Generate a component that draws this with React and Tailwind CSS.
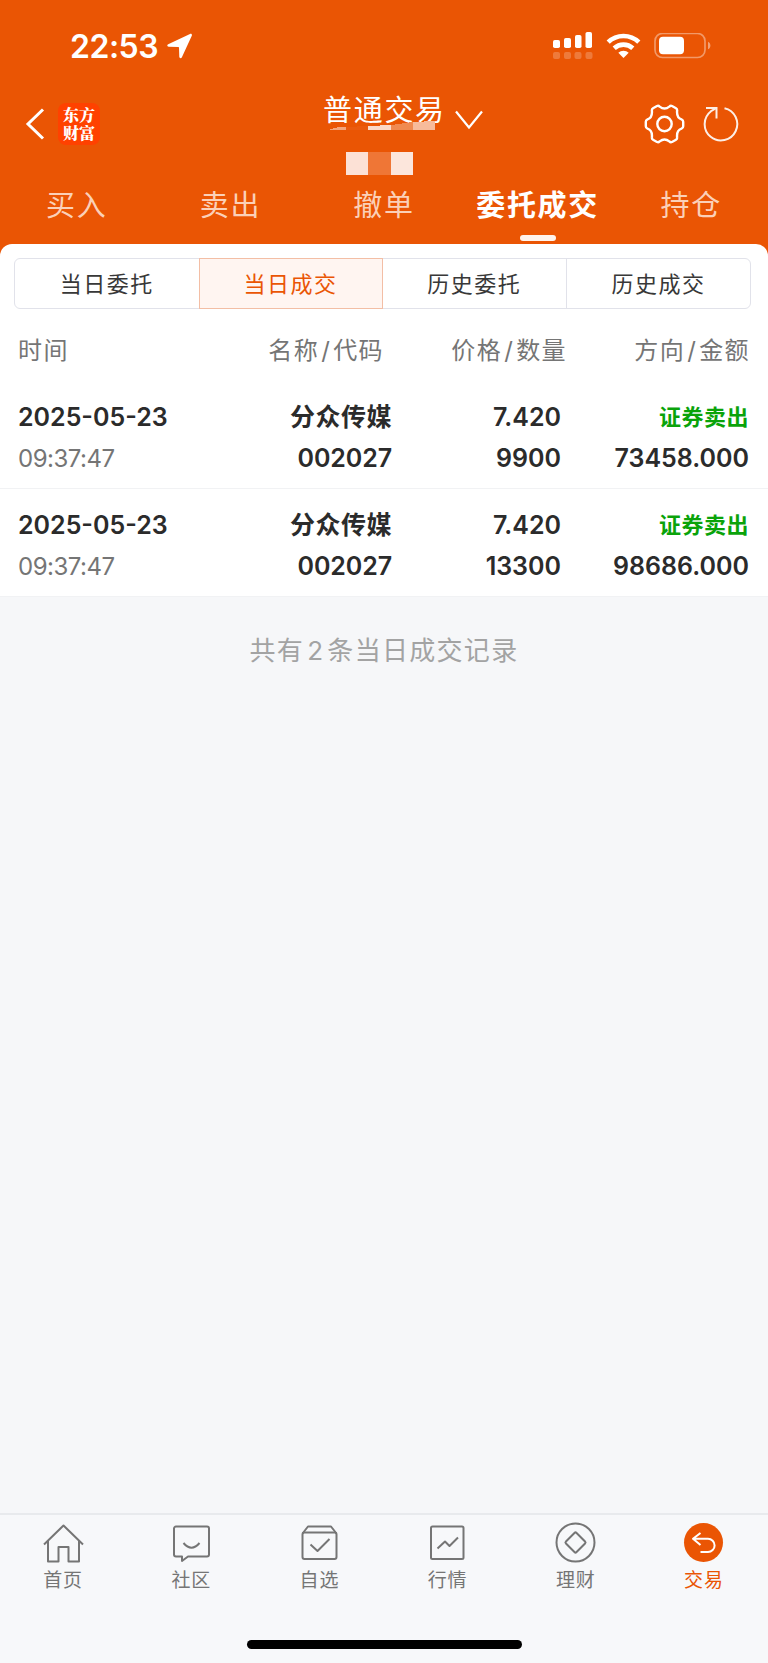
import React from "react";

const tabs = ["买入", "卖出", "撤单", "委托成交", "持仓"];
const segments = ["当日委托", "当日成交", "历史委托", "历史成交"];

const trades = [
  { id: 1, date: "2025-05-23", time: "09:37:47", name: "分众传媒", code: "002027", price: "7.420", qty: "9900", side: "证券卖出", amount: "73458.000" },
  { id: 2, date: "2025-05-23", time: "09:37:47", name: "分众传媒", code: "002027", price: "7.420", qty: "13300", side: "证券卖出", amount: "98686.000" },
];

const StatusBar = () => (
  <div className="flex h-[92px] items-center justify-between pl-[70px] pr-[57px]">
    <div className="flex items-center gap-[9px]">
      <span className="w-[88px] pt-[2px] whitespace-nowrap text-[32px] leading-none font-semibold tracking-[-0.500px]">22:53</span>
      <svg className="h-[26px] w-[26px]" viewBox="0 0 26 26" fill="currentColor">
        <path d="M1.2 11.2 23 1c1.300-.5 2.300.5 1.800 1.800L14.900 24.300c-.700 1.300-2.500 1.100-2.600-.500l-.3-9.200c0-.4-.3-.7-.7-.7l-9.600-.2C.1 13.600-.200 11.900 1.200 11.200z" />
      </svg>
    </div>
    <div className="flex items-center">
      <svg className="h-[28px] w-[40px]" viewBox="0 0 40 28" fill="currentColor">
        <rect x="0" y="8" width="7" height="8" rx="1.800" />
        <rect x="11" y="6" width="7" height="10" rx="1.800" />
        <rect x="22" y="3" width="6.500" height="13" rx="1.800" />
        <rect x="32.500" y="0" width="6.500" height="16" rx="1.800" />
        <g opacity="0.22">
          <rect x="0" y="20" width="7" height="7" rx="2" />
          <rect x="11" y="20" width="7" height="7" rx="2" />
          <rect x="21.500" y="20" width="7" height="7" rx="2" />
          <rect x="32.500" y="20" width="7" height="7" rx="2" />
        </g>
      </svg>
      <svg className="ml-[13px] h-[26px] w-[35px]" viewBox="0 0 35 26" fill="none" stroke="currentColor" strokeWidth="4.600">
        <path d="M2.200 9.200a22 22 0 0 1 30.600 0" />
        <path d="M8.200 15.300a13.600 13.600 0 0 1 18.600 0" />
        <path d="M17.500 25l-5.200-5.200a7.500 7.500 0 0 1 10.400 0z" fill="currentColor" stroke="none" />
      </svg>
      <svg className="ml-[13px] h-[26px] w-[57px]" viewBox="0 0 57 26" fill="currentColor">
        <rect x="1" y="0.500" width="50" height="24" rx="7.500" fill="none" stroke="currentColor" strokeWidth="1.700" opacity="0.4" />
        <rect x="5" y="3.800" width="25" height="17.500" rx="4" />
        <path d="M54 8.700c3.200 1.300 3.200 6.300 0 7.600z" opacity="0.45" />
      </svg>
    </div>
  </div>
);

const Header = () => (
  <header className="h-[256px] bg-[#ea5504] text-white">
    <StatusBar />
    <div className="flex h-[88px] items-start justify-between pl-[25px] pr-[29px]">
      <div className="flex w-[280px] items-center gap-[13px] pt-[11px]">
        <svg className="h-[34px] w-[20px]" viewBox="0 0 20 34" fill="none" stroke="currentColor" strokeWidth="3">
          <path d="M18 2.500 3 17l15 14.500" />
        </svg>
        <div className="flex h-[42px] w-[42px] items-center justify-center rounded-[8px] bg-[#ff4100]">
          <span className="w-[33px] text-center font-['Noto_Serif_CJK_SC','Noto_Sans_CJK_SC',serif] text-[16px] leading-[18px] font-black break-all">东方财富</span>
        </div>
      </div>
      <div className="relative flex w-[176px] items-start pt-[1px]">
        <span className="w-[132px] pt-[2px] pl-[18px] whitespace-nowrap text-[29px] leading-[32px] tracking-[1.700px]">普通交易</span>
        <svg className="mt-[17px] ml-[18px] h-[20px] w-[28px] shrink-0" viewBox="0 0 28 20" fill="none" stroke="currentColor" strokeWidth="2.200">
          <path d="M1 1.500 14 17.500 27 1.500" />
        </svg>
        {/* masked account name */}
        <svg className="absolute top-[28px] left-[25px] h-[56px] w-[106px]" viewBox="0 0 106 56" shapeRendering="crispEdges">
          <path d="M0 9.500c5-2.500 10-2.800 16-2v2z" fill="#f4a57c" />
          <path d="M16 7l22-1v3.500H16z" fill="#ea5a0f" />
          <path d="M38 6l23-1v4.500H38z" fill="#fbd9c8" />
          <path d="M61 5l22-3v7.500H61z" fill="#f08a50" />
          <path d="M83 2l22-1v8.500H83z" fill="#f7bb9b" />
          <rect x="16" y="32" width="22.500" height="23" fill="#fce1d6" />
          <rect x="38" y="32" width="23" height="23" fill="#ef7636" />
          <rect x="61" y="32" width="22" height="23" fill="#fce6dc" />
        </svg>
      </div>
      <div className="flex w-[258px] items-center justify-end gap-[18px] pt-[12px]">
        <svg className="h-[40px] w-[41px]" viewBox="-20.500 -20 41 40" fill="none" stroke="currentColor" strokeWidth="2.400" strokeLinejoin="round">
          <path d="M-11.500-15.800L-7.500-18Q-6-18.600-4.800-17.400Q0-13.600 4.800-17.400Q6-18.600 7.500-18L11.500-15.800Q12.900-15 12.600-13.200Q12-6.300 17-4.700Q18.700-4 18.700-2.200V2.200Q18.700 4 17 4.700Q12 6.300 12.600 13.200Q12.900 15 11.500 15.800L7.500 18Q6 18.600 4.800 17.400Q0 13.600-4.800 17.400Q-6 18.600-7.500 18L-11.500 15.800Q-12.900 15-12.600 13.200Q-12 6.300-17 4.700Q-18.700 4-18.700 2.200V-2.200Q-18.700-4-17-4.700Q-12-6.300-12.600-13.200Q-12.900-15-11.500-15.800Z" />
          <circle r="7.200" />
        </svg>
        <svg className="h-[36px] w-[36px]" viewBox="0 0 36 36" fill="none" stroke="currentColor" strokeWidth="2" opacity="0.9">
          <path d="M21.500 2.200A16.300 16.300 0 1 1 8 5.200L13.500 2" />
          <path d="M3 2h10.500v10.500" />
        </svg>
      </div>
    </div>
    <nav className="grid grid-cols-5">
      {tabs.map(tab => (
        <div key={tab} className="flex flex-col items-center">
          <span className={tab === "委托成交" ? "text-[29px] leading-[52px] font-bold tracking-[1.700px]" : "text-[29px] leading-[52px] tracking-[1.700px] text-[#fbd0b8]"}>{tab}</span>
          {tab === "委托成交" && <i className="mt-[3px] h-[6px] w-[36px] rounded-full bg-[#fff3ec]" />}
        </div>
      ))}
    </nav>
  </header>
);

const TradeRow = ({ trade }) => (
  <div className="grid h-[108px] grid-cols-[200px_174px_169px_188px] content-start border-b border-[#f1f2f4] pl-[18px] pr-[19px] pt-[16px] text-[25px] leading-[41px] font-semibold text-[#2b2b2b]">
    <span>{trade.date}</span>
    <span className="text-right tracking-[0.500px]">{trade.name}</span>
    <span className="text-right">{trade.price}</span>
    <span className="text-right text-[22px] tracking-[0.500px] text-[#0aa30a]">{trade.side}</span>
    <span className="text-[24px] font-normal tracking-[-0.500px] text-[#757575]">{trade.time}</span>
    <span className="text-right tracking-[-0.100px]">{trade.code}</span>
    <span className="text-right">{trade.qty}</span>
    <span className="text-right">{trade.amount}</span>
  </div>
);

const Pair = ({ a, b }) => (
  <span className="text-right">
    {a}
    <span className="mx-[2px]">/</span>
    {b}
  </span>
);

const navItems = [
  {
    label: "首页",
    icon: (
      <>
        <path d="M1 20.500 20.500 1.500 40 20.500" />
        <path d="M5 17v20.500h10.500V23h10v14.500H36V17" />
      </>
    ),
  },
  {
    label: "社区",
    icon: (
      <>
        <path d="M5 2.500h31a2 2 0 0 1 2 2v26a2 2 0 0 1-2 2H17l-6 4.500v-4.500H5a2 2 0 0 1-2-2v-26a2 2 0 0 1 2-2z" />
        <path d="M12.500 19q8 9.500 16 0" />
      </>
    ),
  },
  {
    label: "自选",
    icon: (
      <>
        <rect x="3.500" y="8.500" width="34" height="26.500" rx="2" />
        <path d="M3.500 9.500 9 2.500h23l5.500 7" />
        <path d="M11.500 20.500l7 6.500 12-12" />
      </>
    ),
  },
  {
    label: "行情",
    icon: (
      <>
        <rect x="4" y="2.500" width="32.500" height="32.500" rx="1.500" />
        <path d="M10.500 24.500l7.500-7 4.500 4.500 8.500-8.500" />
      </>
    ),
  },
  {
    label: "理财",
    icon: (
      <>
        <circle cx="20.500" cy="18.500" r="19" />
        <rect x="13" y="11" width="15" height="15" rx="1.500" transform="rotate(45 20.500 18.500)" />
      </>
    ),
  },
  {
    label: "交易",
    active: true,
    icon: (
      <>
        <circle cx="20.500" cy="18.500" r="19.500" fill="#ea5504" stroke="none" />
        <path d="M17.500 9 10 14.800 17.500 21M10.500 14.800H25a6.600 6.600 0 0 1 0 13.200h-7.500" stroke="#fff" strokeWidth="2" />
      </>
    ),
  },
];

const BottomNav = () => (
  <footer className="flex h-[150px] flex-col border-t-2 border-[#e8eaed] bg-[#f7f8fa]">
    <div className="-ml-px grid grid-cols-6 pt-[8px]">
      {navItems.map(item => (
        <div key={item.label} className={item.active ? "flex flex-col items-center text-[#ea5504]" : "flex flex-col items-center text-[#757575]"}>
          <svg className="h-[40px] w-[41px] overflow-visible" viewBox="0 -1 41 40" fill="none" stroke="currentColor" strokeWidth="2" strokeLinejoin="round">
            {item.icon}
          </svg>
          <span className="mt-[4px] text-[19px] leading-[28px] tracking-[0.800px]">{item.label}</span>
        </div>
      ))}
    </div>
    <div className="mx-auto mt-[45px] h-[9px] w-[275px] rounded-full bg-black" />
  </footer>
);

export default function App() {
  return (
    <div className="flex h-[1663px] w-[768px] flex-col overflow-hidden bg-[#f6f7f9] font-['Inter','Noto_Sans_CJK_SC',sans-serif]">
      <Header />
      <main className="relative -mt-[12px] flex-1">
        <section className="rounded-t-[12px] bg-white pt-[14px]">
          <div className="mr-[17px] ml-[14px] grid h-[51px] grid-cols-4 rounded-[6px] border border-[#e1e2ea]">
            {segments.map((label, i) => (
              <div
                key={label}
                className={
                  i === 1
                    ? "-my-px flex items-center justify-center border border-[#f3bea5] bg-[#fff5f1] text-[22px] tracking-[1.500px] text-[#ea5504]"
                    : i === 3
                    ? "flex items-center justify-center border-l border-[#e1e2ea] text-[22px] tracking-[1.500px] text-[#383838]"
                    : "flex items-center justify-center text-[22px] tracking-[1.500px] text-[#383838]"
                }
              >
                <span className="pt-[2px]">{label}</span>
              </div>
            ))}
          </div>
          <div className="grid h-[72px] grid-cols-[200px_166px_183px_183px] items-center pt-[12px] pl-[18px] text-[24px] tracking-[1.400px] text-[#757575]">
            <span>时间</span>
            <Pair a="名称" b="代码" />
            <Pair a="价格" b="数量" />
            <Pair a="方向" b="金额" />
          </div>
          {trades.map(trade => (
            <TradeRow key={trade.id} trade={trade} />
          ))}
        </section>
        <p className="mt-[34px] text-center text-[26px] leading-[40px] tracking-[1.300px] text-[#a3a3a3]">
          共有<span className="mx-[3px]">2</span>条当日成交记录
        </p>
      </main>
      <BottomNav />
    </div>
  );
}
